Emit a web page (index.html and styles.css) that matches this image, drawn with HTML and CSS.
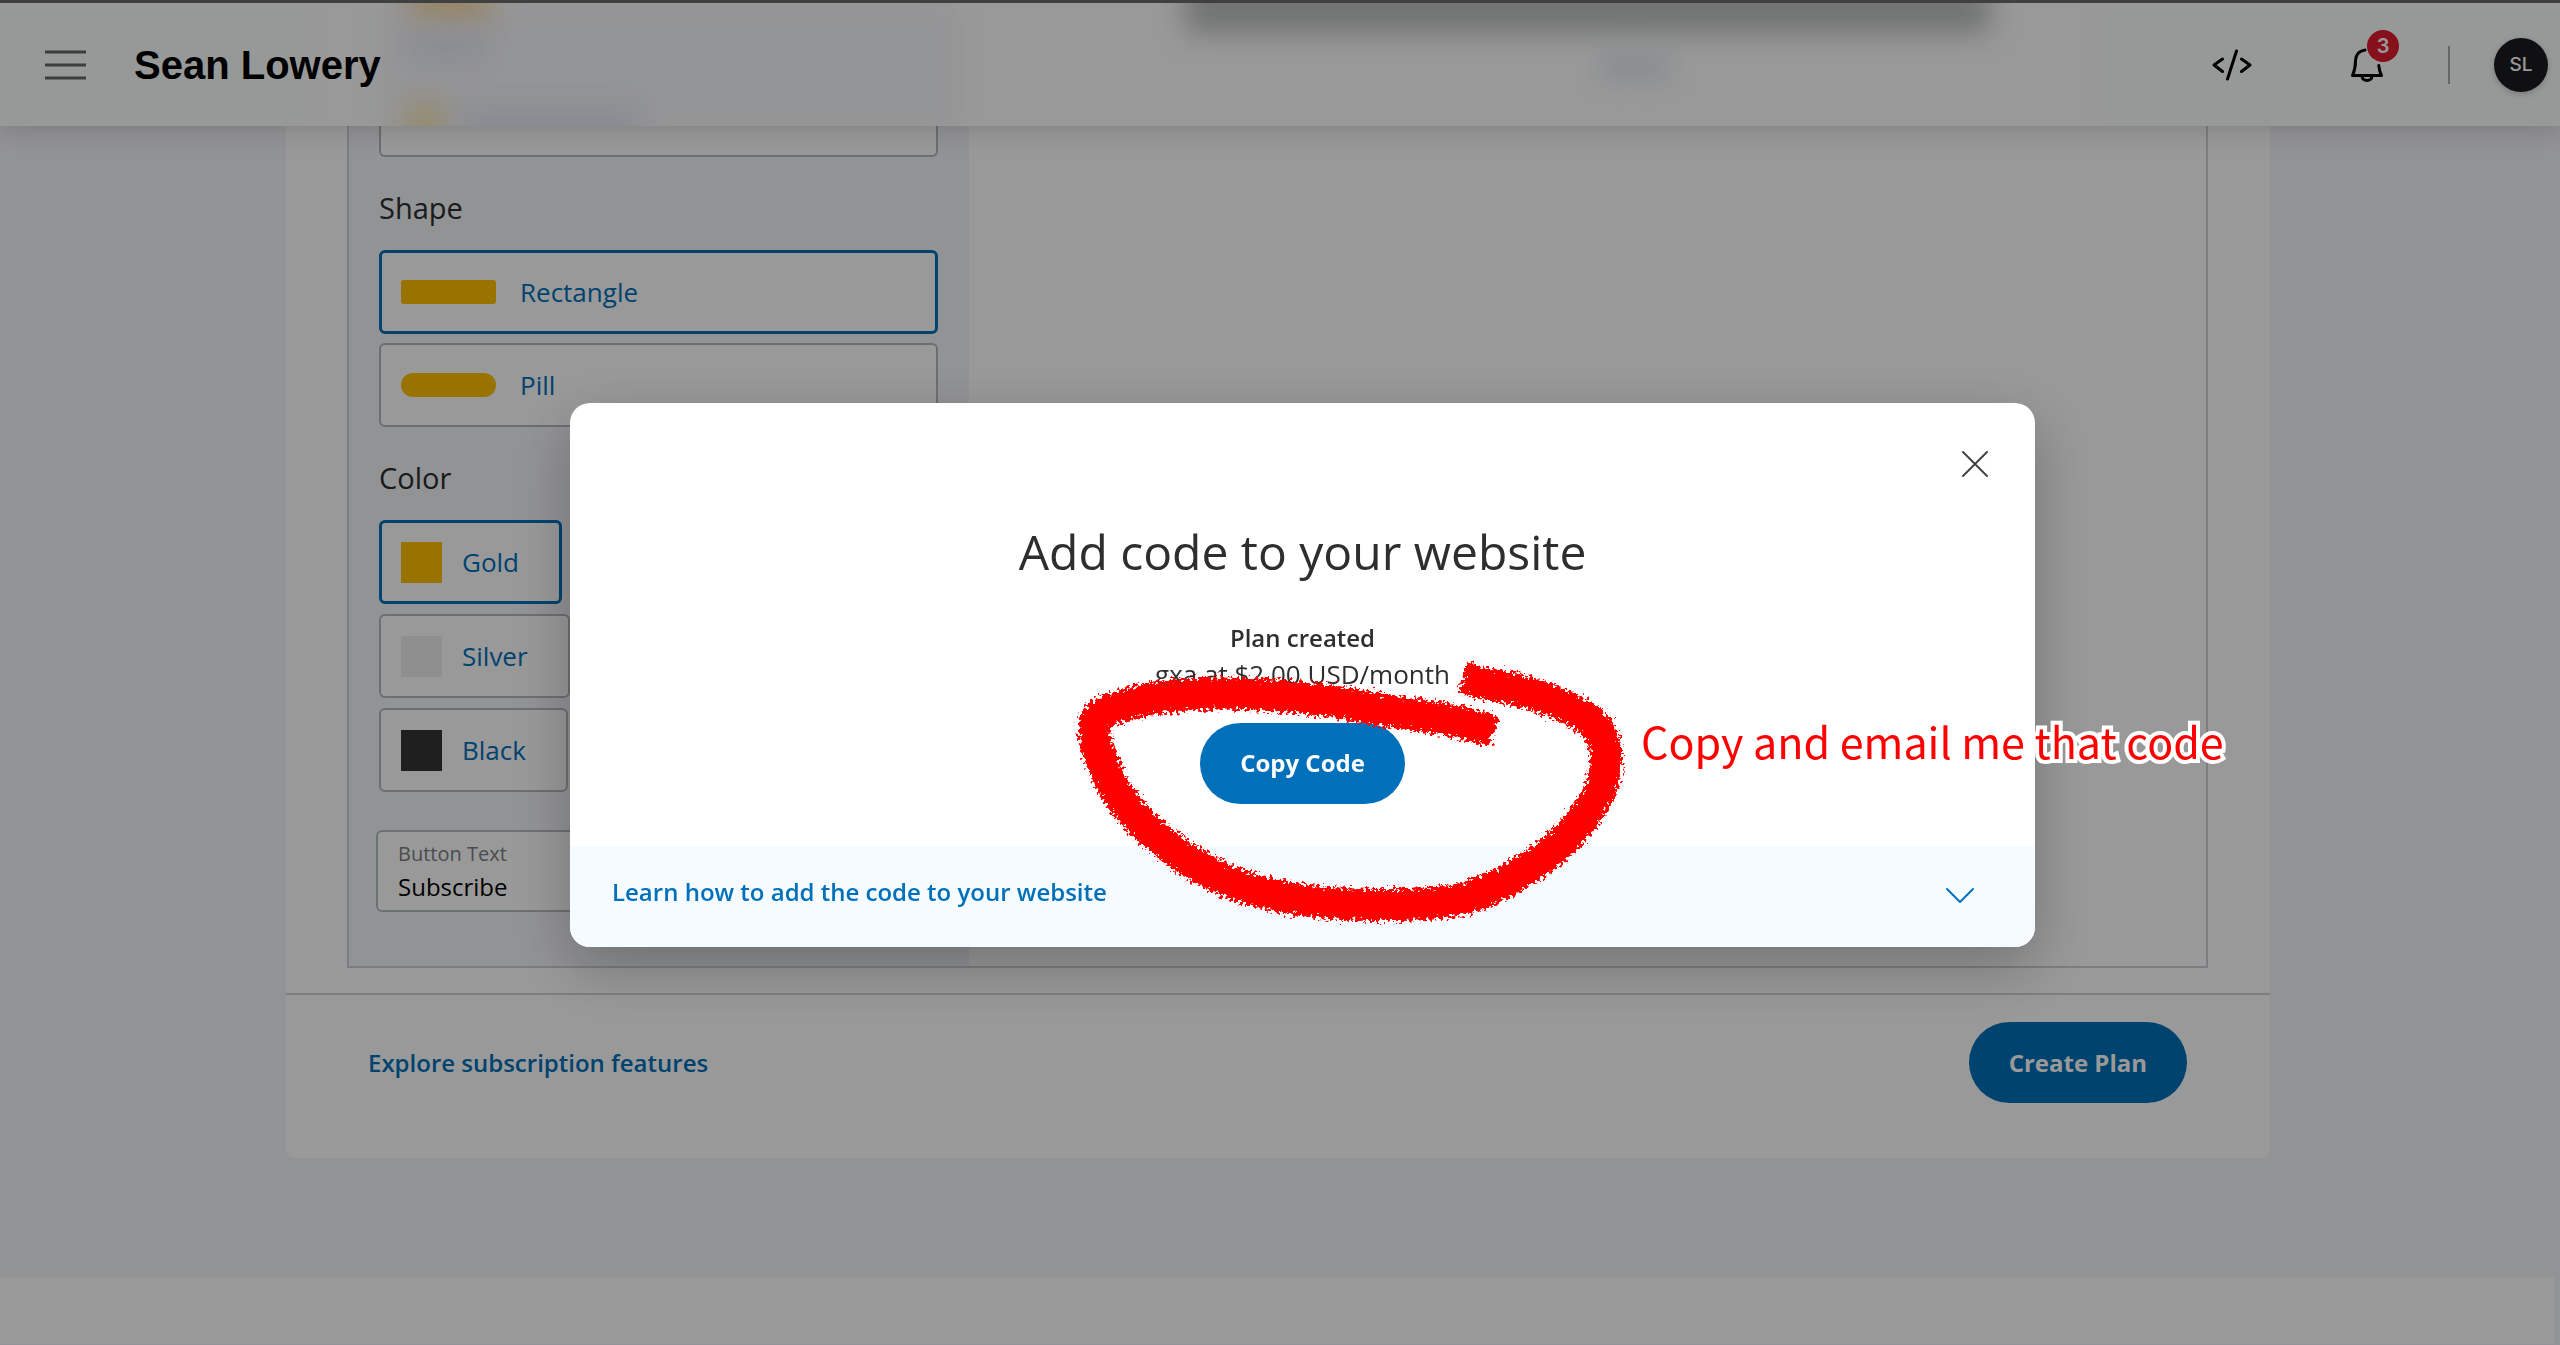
FILE: index.html
```html
<!DOCTYPE html>
<html lang="en">
<head>
<meta charset="utf-8">
<meta name="viewport" content="width=device-width, initial-scale=1">
<title>Add code to your website</title>
<link rel="stylesheet" href="styles.css">
</head>
<body>
<header class="topbar">
  <div class="backdrop">
    <span class="haze haze-panel"></span>
    <span class="haze haze-dark"></span>
    <span class="haze haze-gold"></span>
    <span class="haze haze-blue"></span>
    <span class="haze haze-gold haze-low"></span>
    <span class="haze haze-blue haze-low"></span>
    <span class="haze haze-link"></span>
  </div>
  <button class="icon-button" aria-label="Menu">
    <svg width="42" height="32" viewBox="0 0 42 32" fill="none" stroke="#666" stroke-width="3"><path d="M1 3h41M1 16h41M1 29h41"/></svg>
  </button>
  <span class="account-name">Sean Lowery</span>
  <nav class="tools">
    <button class="icon-button" aria-label="Developer">
      <svg width="40" height="34" viewBox="0 0 40 34" fill="none" stroke="#000" stroke-width="3" stroke-linecap="round" stroke-linejoin="round"><path d="M10.500 11L2 17l8.500 6.500M29.500 11l8.500 6-8.500 6.500M24.500 3L15.500 31"/></svg>
    </button>
    <button class="icon-button bell" aria-label="Notifications">
      <svg width="34" height="36" viewBox="0 0 34 36" fill="none" stroke="#000" stroke-width="3" stroke-linecap="round" stroke-linejoin="round"><path d="M15 3C8.500 4 5.500 8 5.500 14c0 6-.500 9-3 14.500h29c-1.500-3-2.500-6-2.700-10M12 29c0 6 10 6 10 0"/></svg>
      <span class="badge">3</span>
    </button>
    <span class="rule"></span>
    <button class="avatar">SL</button>
  </nav>
</header>

<main class="page">
  <section class="card">
    <div class="builder">
      <form class="sidebar">
        <div class="option-cut"></div>
        <fieldset class="group shapes">
          <legend>Shape</legend>
          <label class="option selected"><input type="radio" name="shape" checked><span class="bar"></span>Rectangle</label>
          <label class="option"><input type="radio" name="shape"><span class="bar pill"></span>Pill</label>
        </fieldset>
        <fieldset class="group swatches">
          <legend>Color</legend>
          <label class="option selected"><input type="radio" name="color" checked><span class="swatch gold"></span>Gold</label>
          <label class="option"><input type="radio" name="color"><span class="swatch silver"></span>Silver</label>
          <label class="option"><input type="radio" name="color"><span class="swatch black"></span>Black</label>
        </fieldset>
        <div class="field">
          <label for="button-text">Button Text</label>
          <input id="button-text" type="text" value="Subscribe">
        </div>
      </form>
    </div>
    <footer class="actions">
      <a class="link" href="#">Explore subscription features</a>
      <button class="primary">Create Plan</button>
    </footer>
  </section>
</main>
<div class="page-end"></div>

<div class="overlay">
  <div class="modal" role="dialog" aria-labelledby="dialog-title">
    <div class="modal-body">
      <button class="icon-button close" aria-label="Close">
        <svg width="28" height="28" viewBox="0 0 28 28" fill="none" stroke="#444" stroke-width="2" stroke-linecap="round"><path d="M2 2l24 24M26 2L2 26"/></svg>
      </button>
      <h1 id="dialog-title">Add code to your website</h1>
      <p class="plan"><strong>Plan created</strong><br>gxa at $2.00 USD/month</p>
      <button class="primary">Copy Code</button>
    </div>
    <button class="learn">
      Learn how to add the code to your website
      <svg width="30" height="18" viewBox="0 0 30 18" fill="none" stroke="#0070ba" stroke-width="2" stroke-linecap="round" stroke-linejoin="round"><path d="M2 2l13 13L28 2"/></svg>
    </button>
    <svg class="scribble" width="600" height="320" viewBox="1040 640 600 320" fill="none">
      <defs>
        <filter id="chalk" x="-10%" y="-10%" width="120%" height="120%">
          <feTurbulence type="fractalNoise" baseFrequency="0.3" numOctaves="3" seed="4" result="n"/>
          <feDisplacementMap in="SourceGraphic" in2="n" scale="15" xChannelSelector="R" yChannelSelector="G"/>
        </filter>
      </defs>
      <path filter="url(#chalk)" stroke="#f00" stroke-width="32" stroke-linejoin="round" d="M1463 678C1495 687 1520 688 1547 699C1583 713 1604 724 1606 753C1608 788 1590 815 1556 848C1527 872 1497 887 1467 898C1432 906 1402 905 1372 905C1312 904 1262 896 1222 879C1172 855 1122 813 1107 773C1098 748 1092 738 1095 721C1102 707 1142 699 1182 695C1232 691 1312 696 1359 706C1412 715 1452 717 1494 732"/>
    </svg>
    <span class="note">Copy and email me that code</span>
  </div>
</div>
</body>
</html>
```
FILE: styles.css
```css
* { box-sizing: border-box; }

body {
  margin: 0;
  min-height: 100vh;
  background: #f4f5f8;
  color: #2c2e2f;
  font: 26px/36px "Open Sans", "Noto Sans", sans-serif;
}

button, input { font: inherit; color: inherit; }
button { cursor: pointer; }

.icon-button {
  display: flex;
  padding: 0;
  border: 0;
  background: none;
}

/* Top bar */
.topbar {
  position: relative;
  z-index: 1;
  display: flex;
  align-items: center;
  gap: 48px;
  height: 126px;
  padding: 0 12px 0 44px;
  border-top: 3px solid #6b6b6b;
  background: linear-gradient(90deg, #fbfffd 0, #fbfffd 250px, #fff 420px, #fff 78%, #fbfffd 84%);
  box-shadow: 0 4px 24px rgba(0, 0, 0, .16);
}
.topbar > :not(.backdrop) { position: relative; }
.account-name {
  font: bold 40px/48px "Liberation Sans", Arial, sans-serif;
  color: #000;
}
.tools {
  display: flex;
  align-items: center;
  margin-left: auto;
}
.bell { position: relative; margin: 0 64px 0 98px; }
.badge {
  position: absolute;
  top: -17px;
  left: 17px;
  width: 32px;
  height: 32px;
  border-radius: 50%;
  background: #df1b2f;
  color: #fff;
  font: 600 20px/32px Inter, sans-serif;
  text-align: center;
}
.rule { width: 2px; height: 38px; margin-right: 44px; background: #aaa; }
.avatar {
  width: 54px;
  height: 54px;
  padding: 0;
  border: 0;
  border-radius: 50%;
  background: #1b1c1e;
  color: #fff;
  font: 500 19px/54px Inter, sans-serif;
  box-shadow: 0 2px 6px rgba(0, 0, 0, .2);
}

.backdrop { position: absolute; inset: 0; overflow: hidden; }
.haze { position: absolute; filter: blur(14px); }
.haze-panel { left: 380px; top: 0; width: 580px; height: 130px; background: #f7f8fb; }
.haze-dark { left: 1185px; top: -20px; width: 805px; height: 50px; background: #bcc0be; }
.haze-gold { left: 410px; top: -22px; width: 80px; height: 38px; background: #f7dca8; }
.haze-blue { left: 410px; top: 32px; width: 75px; height: 24px; background: #e2e6f2; }
.haze-gold.haze-low { left: 405px; top: 100px; width: 40px; height: 40px; background: #f7e6b4; }
.haze-blue.haze-low { left: 460px; top: 104px; width: 180px; height: 40px; background: #e2e8f3; }
.haze-link { left: 1600px; top: 50px; width: 70px; height: 26px; background: #dfe6ee; }

/* Plan builder card */
.page { padding: 0 290px 119px 286px; }
.card {
  border-radius: 0 0 8px 8px;
  background: #fff;
}
.builder {
  display: grid;
  grid-template-columns: 620px 1fr;
  margin: 0 62px 0 61px;
  border: 2px solid #ced3d8;
  border-top: 0;
}
.sidebar {
  padding: 0 31px 54px 30px;
  background: #f4f5f8;
}
.option-cut {
  height: 31px;
  border: 2px solid #b5b9bd;
  border-top: 0;
  border-radius: 0 0 6px 6px;
  background: #fff;
}
.group {
  display: flex;
  flex-direction: column;
  gap: 10px;
  margin: 0;
  padding: 0;
  border: 0;
}
.shapes { gap: 9px; }
.group legend {
  padding: 31px 0 22px;
  font-size: 29px;
  line-height: 40px;
}
.option {
  display: flex;
  align-items: center;
  gap: 24px;
  height: 84px;
  padding: 0 20px;
  border: 2px solid #b5b9bd;
  border-radius: 6px;
  background: #fff;
  color: #0070ba;
}
.option.selected { padding: 0 19px; border: 3px solid #0070ba; }
.option input { position: absolute; opacity: 0; }
.swatches { align-items: flex-start; }
.swatches .option { gap: 20px; padding-right: 40px; }
.bar { width: 95px; height: 24px; border-radius: 3px; background: #fdc000; }
.bar.pill { border-radius: 12px; }
.swatch { width: 41px; height: 41px; }
.gold { background: #fdc000; }
.silver { background: #eee; }
.black { background: #343436; }

.field {
  display: flex;
  flex-direction: column;
  height: 82px;
  margin: 38px 0 0 -3px;
  padding: 7px 20px;
  border: 2px solid #b5bcc2;
  border-radius: 6px;
  background: #fff;
}
.field label { font-size: 20px; line-height: 30px; color: #7b8085; }
.field input {
  width: 100%;
  height: 36px;
  padding: 0;
  border: 0;
  background: none;
  color: #000;
  font-size: 24px;
}

.actions {
  display: flex;
  align-items: center;
  justify-content: space-between;
  margin-top: 25px;
  padding: 27px 83px 55px 82px;
  border-top: 2px solid #ced3d8;
}
.link {
  color: #0070ba;
  font-size: 24px;
  font-weight: 550;
  text-decoration: none;
}
.primary {
  height: 81px;
  padding: 0 40px;
  border: 0;
  border-radius: 41px;
  background: #0070ba;
  color: #fff;
  font-size: 24px;
  font-weight: 700;
}
.page-end { height: 67px; margin-right: 6px; background: #fff; }

/* Dialog */
.overlay {
  position: fixed;
  inset: 0;
  z-index: 2;
  display: flex;
  align-items: center;
  justify-content: center;
  padding: 4px 0 0 45px;
  background: rgba(0, 0, 0, .4);
}
.modal {
  position: relative;
  width: 1465px;
  border-radius: 20px;
  background: #fff;
  box-shadow: 0 20px 60px rgba(0, 0, 0, .25);
}
.modal-body {
  display: flex;
  flex-direction: column;
  align-items: center;
  padding: 47px 46px 42px;
}
.close { align-self: flex-end; }
h1 {
  margin: 42px 0 35px;
  font-size: 48px;
  font-weight: 400;
  line-height: 64px;
}
.plan { margin: 0 0 31px; text-align: center; }
.plan strong { font-size: 24px; font-weight: 550; }
.learn {
  display: flex;
  align-items: center;
  justify-content: space-between;
  width: 100%;
  height: 101px;
  padding: 0 60px 8px 42px;
  border: 0;
  border-radius: 0 0 20px 20px;
  background: #f5fbff;
  color: #0070ba;
  font-size: 24px;
  font-weight: 550;
}
.learn svg { margin-top: 8px; }

/* Hand-drawn mark-up over the dialog */
.scribble { position: absolute; left: 470px; top: 237px; pointer-events: none; }
.note {
  position: absolute;
  left: 1071px;
  top: 305px;
  color: #f00;
  font: 43px/64px "Noto Sans CJK SC", "Open Sans", sans-serif;
  white-space: nowrap;
  -webkit-text-stroke: 8px #fff;
  paint-order: stroke fill;
}
```
